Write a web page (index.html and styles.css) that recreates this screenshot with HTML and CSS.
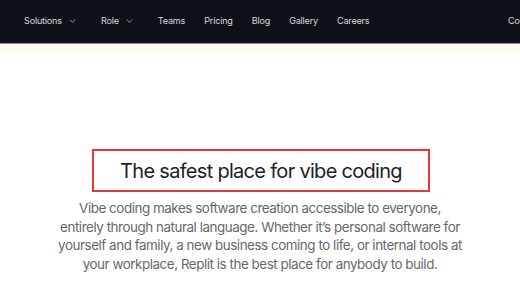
FILE: index.html
```html
<!DOCTYPE html>
<html lang="en">
<head>
<meta charset="utf-8">
<link rel="stylesheet" href="styles.css">
</head>
<body>
<header class="nav">
  <nav class="nav-links">
    <a class="nav-item">Solutions <svg class="chev" viewBox="0 0 10 6"><path d="M1 1l4 4 4-4" fill="none" stroke="currentColor" stroke-width="1.2"/></svg></a>
    <a class="nav-item">Role <svg class="chev" viewBox="0 0 10 6"><path d="M1 1l4 4 4-4" fill="none" stroke="currentColor" stroke-width="1.2"/></svg></a>
    <a class="nav-item">Teams</a>
    <a class="nav-item">Pricing</a>
    <a class="nav-item">Blog</a>
    <a class="nav-item">Gallery</a>
    <a class="nav-item">Careers</a>
  </nav>
  <div class="nav-right"><a class="nav-item">Contact sales</a></div>
</header>
<main class="hero">
  <div class="glow"></div>
  <h1 class="title">The safest place for vibe coding</h1>
  <p class="lead">Vibe coding makes software creation accessible to everyone, entirely through natural language. Whether it’s personal software for yourself and family, a new business coming to life, or internal tools at your workplace, Replit is the best place for anybody to build.</p>
</main>
</body>
</html>
```

FILE: styles.css
```css
* { box-sizing: border-box; }
html, body { margin: 0; padding: 0; background: #ffffff; overflow: hidden; }
body { font-family: Inter, "Noto Sans", sans-serif; width: 520px; height: 293px; }

.nav {
  height: 44px;
  background: #0e1218;
  border-bottom: 1px solid #8d8f91;
  display: flex;
  align-items: center;
  padding: 0 0 2px 24px;
  white-space: nowrap;
  overflow: hidden;
}
.nav-links { display: flex; align-items: center; gap: 19px; }
.nav-item {
  color: #d3d6db;
  font-size: 9.1px;
  letter-spacing: -0.2px;
  display: flex;
  align-items: center;
}
.chev { width: 7px; height: 4px; margin-left: 7px; margin-right: 6px; color: #aeb2b8; }
.nav-right { margin-left: auto; width: 12px; overflow: visible; }

.hero {
  display: flex;
  flex-direction: column;
  align-items: center;
  padding-top: 105px;
  position: relative;
}
.glow {
  position: absolute;
  top: 0; left: 0; right: 0;
  height: 16px;
  background: linear-gradient(#fdf8ee, #ffffff);
}
.title {
  margin: 0 0 0 2px;
  width: 338px;
  height: 43px;
  border: 2px solid #e53935;
  display: flex;
  align-items: center;
  justify-content: center;
  font-size: 20px;
  font-weight: 400;
  color: #1d2127;
  letter-spacing: -0.7px;
}
.lead {
  margin: 7px 0 0;
  width: 408px;
  text-align: center;
  font-size: 13.4px;
  letter-spacing: -0.45px;
  line-height: 18.6px;
  color: #64686e;
}
```
